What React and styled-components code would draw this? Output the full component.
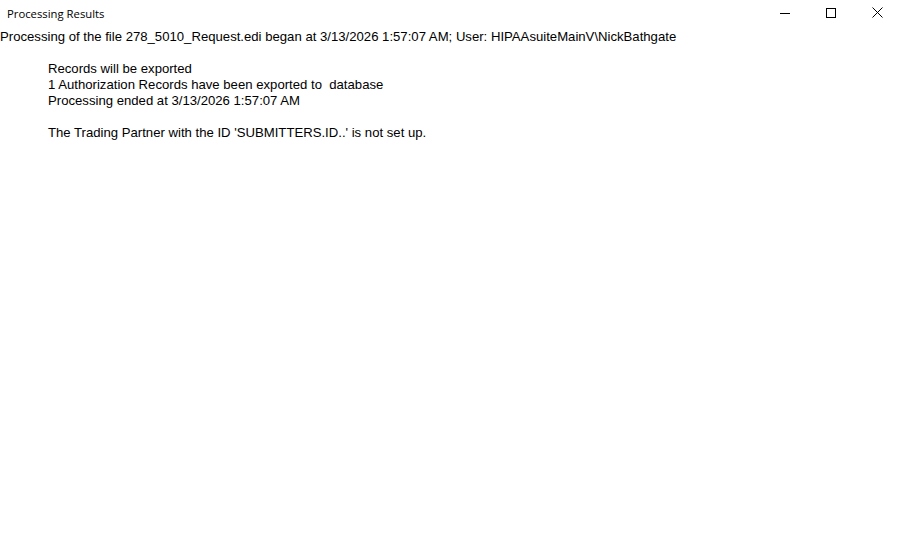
import React from 'react'
import styled, { createGlobalStyle } from 'styled-components'

const GlobalStyle = createGlobalStyle`
  html, body {
    margin: 0;
    padding: 0;
    background: #ffffff;
  }
  #root {
    width: 900px;
    height: 544px;
  }
`

const Window = styled.div`
  width: 900px;
  height: 544px;
  background: #ffffff;
  display: flex;
  flex-direction: column;
  overflow: hidden;
`

const TitleBar = styled.div`
  height: 29px;
  display: flex;
  align-items: center;
  justify-content: space-between;
`

const Title = styled.div`
  padding-left: 7px;
  font-family: 'Open Sans', 'Noto Sans', sans-serif;
  font-size: 11.3px;
  color: #000;
  margin-top: -2px;
`

const Controls = styled.div`
  display: flex;
  height: 100%;
`

const ControlButton = styled.div`
  width: 46px;
  height: 100%;
  display: flex;
  align-items: center;
  justify-content: center;
  margin-top: -2px;
`

const Body = styled.div`
  font-family: 'Liberation Sans', Arial, sans-serif;
  font-size: 13.15px;
  color: #000;
  line-height: 16px;
`

const Header = styled.div`
  white-space: pre;
`

const Messages = styled.div`
  padding-left: 48px;
  padding-top: 16px;
  white-space: pre;
`

const Line = styled.div`
  height: 16px;
`

function WindowControls() {
  return (
    <Controls>
      <ControlButton>
        <svg width="10" height="10" viewBox="0 0 10 10">
          <line x1="0" y1="5.5" x2="10" y2="5.5" stroke="#000" strokeWidth="1" />
        </svg>
      </ControlButton>
      <ControlButton>
        <svg width="10" height="10" viewBox="0 0 10 10">
          <rect x="0.5" y="0.5" width="9" height="9" fill="none" stroke="#000" strokeWidth="1" />
        </svg>
      </ControlButton>
      <ControlButton>
        <svg width="11" height="11" viewBox="0 0 11 11">
          <path d="M0.5 0.5 L10.5 10.5 M10.5 0.5 L0.5 10.5" stroke="#000" strokeWidth="1" />
        </svg>
      </ControlButton>
    </Controls>
  )
}

export default function App() {
  const lines = [
    'Records will be exported',
    '1 Authorization Records have been exported to  database',
    'Processing ended at 3/13/2026 1:57:07 AM',
    '',
    "The Trading Partner with the ID 'SUBMITTERS.ID..' is not set up.",
  ]
  return (
    <>
      <GlobalStyle />
      <Window>
        <TitleBar>
          <Title>Processing Results</Title>
          <WindowControls />
        </TitleBar>
        <Body>
          <Header>
            Processing of the file 278_5010_Request.edi began at 3/13/2026 1:57:07 AM; User: HIPAAsuiteMainV\NickBathgate
          </Header>
          <Messages>
            {lines.map((l, i) => (
              <Line key={i}>{l}</Line>
            ))}
          </Messages>
        </Body>
      </Window>
    </>
  )
}
